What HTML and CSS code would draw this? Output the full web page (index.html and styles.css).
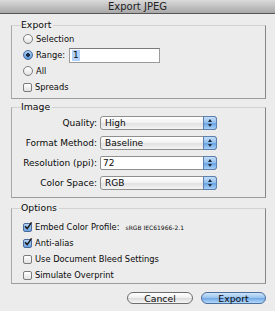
FILE: index.html
```html
<!DOCTYPE html>
<html lang="en">
<head>
  <meta charset="UTF-8">
  <title>Export JPEG</title>
  <link rel="stylesheet" href="styles.css">
</head>
<body>
<div class="window">
  <div class="titlebar">Export JPEG</div>
  <div class="content">
    <fieldset class="group group-export">
      <legend>Export</legend>
      <div class="row"><span class="radio"></span>Selection</div>
      <div class="row"><span class="radio on"></span>Range:<span class="field range"><span class="sel">1</span></span></div>
      <div class="row"><span class="radio"></span>All</div>
      <div class="row"><span class="check"></span>Spreads</div>
    </fieldset>

    <fieldset class="group group-image">
      <legend>Image</legend>
      <div class="prow"><span class="plabel">Quality:</span><span class="popup">High<span class="stepper"></span></span></div>
      <div class="prow"><span class="plabel">Format Method:</span><span class="popup">Baseline<span class="stepper"></span></span></div>
      <div class="prow"><span class="plabel">Resolution (ppi):</span><span class="popup combo">72<span class="stepper"></span></span></div>
      <div class="prow"><span class="plabel">Color Space:</span><span class="popup">RGB<span class="stepper"></span></span></div>
    </fieldset>

    <fieldset class="group group-options">
      <legend>Options</legend>
      <div class="row"><span class="check on"><svg viewBox="0 0 10 10" width="10" height="10"><path d="M2 5.2 L4.2 7.6 L8.6 1.4" fill="none" stroke="#1a1a1a" stroke-width="1.6"/></svg></span><span class="embed">Embed Color Profile:</span><span class="profile">sRGB IEC61966-2.1</span></div>
      <div class="row"><span class="check on"><svg viewBox="0 0 10 10" width="10" height="10"><path d="M2 5.2 L4.2 7.6 L8.6 1.4" fill="none" stroke="#1a1a1a" stroke-width="1.6"/></svg></span>Anti-alias</div>
      <div class="row"><span class="check"></span>Use Document Bleed Settings</div>
      <div class="row"><span class="check"></span>Simulate Overprint</div>
    </fieldset>
  </div>
  <div class="buttons">
    <span class="btn">Cancel</span>
    <span class="btn default">Export</span>
  </div>
</div>
</body>
</html>
```

FILE: styles.css
```css
body {
  margin: 0;
  background: #ececec;
  font-family: "DejaVu Sans", sans-serif;
  font-size: 9px;
  color: #0a0a0a;
}
.window {
  width: 275px;
  height: 311px;
  overflow: hidden;
}
.titlebar {
  height: 13px;
  line-height: 14px;
  border-bottom: 1px solid #555;
  background: linear-gradient(#dadada, #a8a8a8);
  text-align: center;
  font-size: 10px;
  color: #222;
}
.content {
  padding: 5px 9px 0 11px;
}
.group {
  margin: 0;
  padding: 0 0 3px 9px;
  border: 1px solid;
  border-color: #d2d2d2 #858585 #9c9c9c #a9a9a9;
  min-width: 0;
}
.group legend {
  padding: 0 2px 0 0;
  line-height: 12px;
  font-size: 9.3px;
}
.group-image {
  margin-top: 2px;
  padding-top: 3px;
  padding-bottom: 7px;
}
.group-options {
  margin-top: 4px;
  padding-top: 5px;
  padding-bottom: 0;
}
.row {
  display: flex;
  align-items: center;
  height: 16px;
  padding-left: 2px;
  font-size: 8.3px;
}
.radio {
  width: 10px;
  height: 10px;
  box-sizing: border-box;
  border: 1px solid #7c7c7c;
  border-radius: 50%;
  background: linear-gradient(#ffffff, #e2e2e2);
  margin-right: 3px;
}
.radio.on {
  border-color: #4a6b9a;
  background: radial-gradient(circle at 50% 50%, #1c2a40 0 1.6px, transparent 2px), linear-gradient(#a9cdf3, #5d97da);
}
.check {
  width: 9px;
  height: 9px;
  box-sizing: border-box;
  border: 1px solid #7c7c7c;
  border-radius: 2px;
  background: linear-gradient(#ffffff, #e2e2e2);
  margin-right: 3px;
  position: relative;
}
.check.on {
  border-color: #4a6b9a;
  background: linear-gradient(#b4d4f5, #6aa2df);
}
.check svg {
  position: absolute;
  left: -1px;
  top: -3px;
}
.field {
  box-sizing: border-box;
  height: 15px;
  background: #fff;
  border: 1px solid #9a9a9a;
  border-top-color: #7a7a7a;
  display: flex;
  align-items: center;
  padding-left: 2px;
  font-size: 9px;
}
.range {
  width: 91px;
  margin-left: 4px;
}
.sel {
  background: #b3d3fb;
  padding: 0 1px;
  line-height: 11px;
}
.prow {
  display: flex;
  align-items: center;
  height: 14px;
  margin-bottom: 6px;
}
.prow:last-child {
  margin-bottom: 0;
}
.plabel {
  width: 76px;
  text-align: right;
  margin-right: 3px;
  white-space: nowrap;
}
.popup {
  box-sizing: border-box;
  width: 117px;
  height: 14px;
  border: 1px solid #8f8f8f;
  border-radius: 3px;
  background: linear-gradient(#ffffff 0%, #f2f2f2 45%, #e2e2e2 55%, #f4f4f4 100%);
  display: flex;
  align-items: center;
  padding-left: 4px;
  position: relative;
}
.popup.combo {
  background: #fff;
  border-radius: 2px 3px 3px 2px;
  padding-left: 2px;
}
.stepper {
  position: absolute;
  right: -1px;
  top: -1px;
  width: 14px;
  height: 14px;
  box-sizing: border-box;
  border: 1px solid #5b7fae;
  border-radius: 0 3px 3px 0;
  background: linear-gradient(#c4def8 0%, #8fbdec 48%, #6aa3e2 55%, #a9d2f8 100%);
}
.stepper::before,
.stepper::after {
  content: "";
  position: absolute;
  left: 4px;
  border-left: 2.5px solid transparent;
  border-right: 2.5px solid transparent;
}
.stepper::before {
  top: 2px;
  border-bottom: 3px solid #1d2b3e;
}
.stepper::after {
  bottom: 2px;
  border-top: 3px solid #1d2b3e;
}
.embed {
  white-space: nowrap;
  margin-right: 6px;
}
.profile {
  font-size: 6px;
}
.buttons {
  display: flex;
  justify-content: flex-end;
  gap: 8px;
  padding: 8px 9px 0 0;
}
.btn {
  box-sizing: border-box;
  width: 66px;
  height: 12px;
  border: 1px solid #6d6d6d;
  border-radius: 6px;
  background: linear-gradient(#ffffff 0%, #f0f0f0 45%, #dcdcdc 55%, #f6f6f6 100%);
  display: flex;
  align-items: center;
  justify-content: center;
  font-size: 9.3px;
}
.btn.default {
  width: 65px;
  border-color: #4d6f9e;
  background: linear-gradient(#cde3f9 0%, #9cc6f0 45%, #74aae6 55%, #b3d9fb 100%);
}
```
